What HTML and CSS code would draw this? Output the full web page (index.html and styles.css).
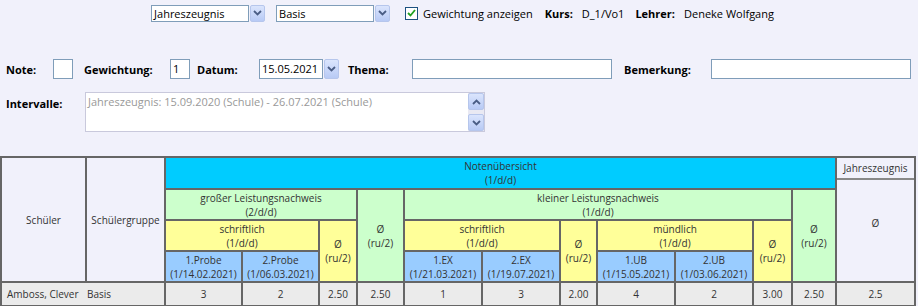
FILE: index.html
```html
<!DOCTYPE html>
<html lang="de">
<head>
<meta charset="UTF-8">
<title>Notenübersicht</title>
<link rel="stylesheet" href="styles.css">
</head>
<body>
  <!-- Auswahl oben -->
  <div class="topbar">
    <div class="combo">
      <span class="combo-text">Jahreszeugnis</span>
      <span class="combo-btn"><svg width="9" height="6" viewBox="0 0 9 6"><path d="M1 1 L4.5 4.5 L8 1" fill="none" stroke="#4a5d85" stroke-width="1.8"/></svg></span>
    </div>
    <div class="combo">
      <span class="combo-text">Basis</span>
      <span class="combo-btn"><svg width="9" height="6" viewBox="0 0 9 6"><path d="M1 1 L4.5 4.5 L8 1" fill="none" stroke="#4a5d85" stroke-width="1.8"/></svg></span>
    </div>
    <span class="check"><svg width="9" height="8" viewBox="0 0 9 8"><path d="M1 4 L3.5 6.5 L8 1" fill="none" stroke="#21a121" stroke-width="1.8"/></svg></span>
    <span class="check-label">Gewichtung anzeigen</span>
    <b class="info-label">Kurs:</b><span class="info-value">D_1/Vo1</span>
    <b class="info-label">Lehrer:</b><span class="info-value">Deneke Wolfgang</span>
  </div>

  <!-- Eingabe -->
  <div class="form">
    <div class="form-row">
      <b class="lbl lbl-note">Note:</b>
      <span class="field small"></span>
      <b class="lbl lbl-gew">Gewichtung:</b>
      <span class="field small">1</span>
      <b class="lbl lbl-datum">Datum:</b>
      <div class="combo date">
        <span class="combo-text">15.05.2021</span>
        <span class="combo-btn"><svg width="9" height="6" viewBox="0 0 9 6"><path d="M1 1 L4.5 4.5 L8 1" fill="none" stroke="#4a5d85" stroke-width="1.8"/></svg></span>
      </div>
      <b class="lbl lbl-thema">Thema:</b>
      <span class="field wide"></span>
      <b class="lbl lbl-bem">Bemerkung:</b>
      <span class="field wide"></span>
    </div>
    <div class="form-row intervals">
      <b class="lbl lbl-int">Intervalle:</b>
      <div class="listbox">
        <span class="listbox-text">Jahreszeugnis: 15.09.2020 (Schule) - 26.07.2021 (Schule)</span>
        <div class="scroll">
          <span class="scroll-btn"><svg width="9" height="6" viewBox="0 0 9 6"><path d="M1 5 L4.5 1.5 L8 5" fill="none" stroke="#4a5d85" stroke-width="1.8"/></svg></span>
          <span class="scroll-btn"><svg width="9" height="6" viewBox="0 0 9 6"><path d="M1 1 L4.5 4.5 L8 1" fill="none" stroke="#4a5d85" stroke-width="1.8"/></svg></span>
        </div>
      </div>
    </div>
  </div>

  <!-- Notentabelle -->
  <table class="grades">
    <colgroup>
      <col style="width:85px"><col style="width:79px">
      <col style="width:77px"><col style="width:77px"><col style="width:38px"><col style="width:47px">
      <col style="width:78px"><col style="width:78px"><col style="width:37px">
      <col style="width:78px"><col style="width:78px"><col style="width:39px">
      <col style="width:44px"><col style="width:79px">
    </colgroup>
    <tr class="r1">
      <td rowspan="4" class="plain">Schüler</td>
      <td rowspan="4" class="plain">Schülergruppe</td>
      <td colspan="11" class="cyan">Notenübersicht<br>(1/d/d)</td>
      <td rowspan="4" class="plain jz">
        <div class="jz-head">Jahreszeugnis</div>
        <div class="jz-avg">Ø</div>
      </td>
    </tr>
    <tr class="r2">
      <td colspan="3" class="green">großer Leistungsnachweis<br>(2/d/d)</td>
      <td rowspan="3" class="green">Ø<br>(ru/2)</td>
      <td colspan="6" class="green">kleiner Leistungsnachweis<br>(1/d/d)</td>
      <td rowspan="3" class="green">Ø<br>(ru/2)</td>
    </tr>
    <tr class="r3">
      <td colspan="2" class="yellow">schriftlich<br>(1/d/d)</td>
      <td rowspan="2" class="yellow">Ø<br>(ru/2)</td>
      <td colspan="2" class="yellow">schriftlich<br>(1/d/d)</td>
      <td rowspan="2" class="yellow">Ø<br>(ru/2)</td>
      <td colspan="2" class="yellow">mündlich<br>(1/d/d)</td>
      <td rowspan="2" class="yellow">Ø<br>(ru/2)</td>
    </tr>
    <tr class="r4">
      <td class="blue">1.Probe<br>(1/14.02.2021)</td>
      <td class="blue">2.Probe<br>(1/06.03.2021)</td>
      <td class="blue">1.EX<br>(1/21.03.2021)</td>
      <td class="blue">2.EX<br>(1/19.07.2021)</td>
      <td class="blue">1.UB<br>(1/15.05.2021)</td>
      <td class="blue">2.UB<br>(1/03.06.2021)</td>
    </tr>
    <tr class="data">
      <td class="name">Amboss, Clever</td>
      <td class="group">Basis</td>
      <td>3</td><td>2</td><td>2.50</td><td>2.50</td>
      <td>1</td><td>3</td><td>2.00</td>
      <td>4</td><td>2</td><td>3.00</td>
      <td>2.50</td><td>2.5</td>
    </tr>
  </table>
</body>
</html>
```

FILE: styles.css
```css
body{
  margin:0;
  background:#f1f1fb;
  font-family:'Open Sans',sans-serif;
  font-size:11px;
  color:#000;
}

/* top selection bar */
.topbar{
  display:flex;
  align-items:center;
  justify-content:center;
  height:26px;
  padding-left:18px;
}
.combo{display:flex;height:17px;margin-right:11px;}
.combo-text{
  width:94px;
  height:15px;
  line-height:15px;
  padding-left:2px;
  background:#fff;
  border:1px solid #7f9db9;
  font-size:11px;
}
.combo-btn{
  width:13px;
  height:15px;
  margin-left:1px;
  border:1px solid #b6c6ec;
  border-radius:2px;
  background:linear-gradient(#dbe5fd,#b8caf5);
  display:flex;
  align-items:center;
  justify-content:center;
}
.check{
  width:11px;height:11px;
  border:1px solid #1c5180;
  background:#fff;
  display:flex;align-items:center;justify-content:center;
  margin-left:4px;margin-right:5px;
}
.check-label{margin-right:12px;}
.info-label{margin-right:9px;}
.info-value{margin-right:11px;}

/* entry form */
.form{padding:33px 0 0 6px;height:130px;box-sizing:border-box;}
.form-row{display:flex;align-items:center;height:20px;}
.lbl{font-weight:bold;}
.lbl-note{width:47px;}
.lbl-gew{width:86px;margin-left:11px;}
.lbl-datum{width:62px;margin-left:7px;}
.lbl-thema{width:64px;margin-left:9px;}
.lbl-bem{width:87px;margin-left:12px;}
.lbl-int{width:79px;align-self:flex-start;margin-top:4px;}
.field{
  height:18px;
  line-height:18px;
  background:#fff;
  border:1px solid #7f9db9;
  box-sizing:content-box;
}
.field.small{width:16px;padding-left:2px;}
.field.wide{width:198px;}
.combo.date{height:20px;margin:0;}
.combo.date .combo-text{width:60px;height:18px;line-height:18px;padding-left:2px;font-size:11px;}
.combo.date .combo-btn{height:18px;}

.intervals{margin-top:13px;height:40px;align-items:flex-start;}
.listbox{
  width:398px;
  height:38px;
  border:1px solid #c9c9dc;
  background:#fff;
  display:flex;
  justify-content:space-between;
}
.listbox-text{color:#999;padding:1px 0 0 2px;}
.scroll{
  width:16px;
  background:#e9e9f3;
  display:flex;flex-direction:column;justify-content:space-between;
}
.scroll-btn{
  height:15px;
  border:1px solid #b6c6ec;
  border-radius:2px;
  background:linear-gradient(#dbe5fd,#b8caf5);
  display:flex;align-items:center;justify-content:center;
}

/* grade table */
.grades{
  border-collapse:collapse;
  table-layout:fixed;
  width:914px;
  font-size:10px;
  color:#333;
}
.grades td{
  border:2px solid #666;
  padding:0;
  text-align:center;
  vertical-align:middle;
  line-height:14px;
  overflow:hidden;
  white-space:nowrap;
}
.grades .r1{height:32px;}
.grades .r2,.grades .r3,.grades .r4{height:31px;}
.plain{background:#f1f1fb;}
.cyan{background:#00ccff;}
.green{background:#ccffcc;}
.yellow{background:#ffff99;}
.blue{background:#99ccff;}
.jz{vertical-align:top !important;}
.jz-head{height:20px;line-height:20px;border-bottom:2px solid #888;}
.jz-avg{height:100px;display:flex;align-items:center;justify-content:center;padding-bottom:14px;box-sizing:border-box;}
.data{height:24px;background:#ebebeb;}
.data td{border-top-color:#999;}
.data .name{text-align:left;padding-left:5px;border-right:none;}
.data .group{text-align:left;padding-left:1px;border-left:none;}
```
